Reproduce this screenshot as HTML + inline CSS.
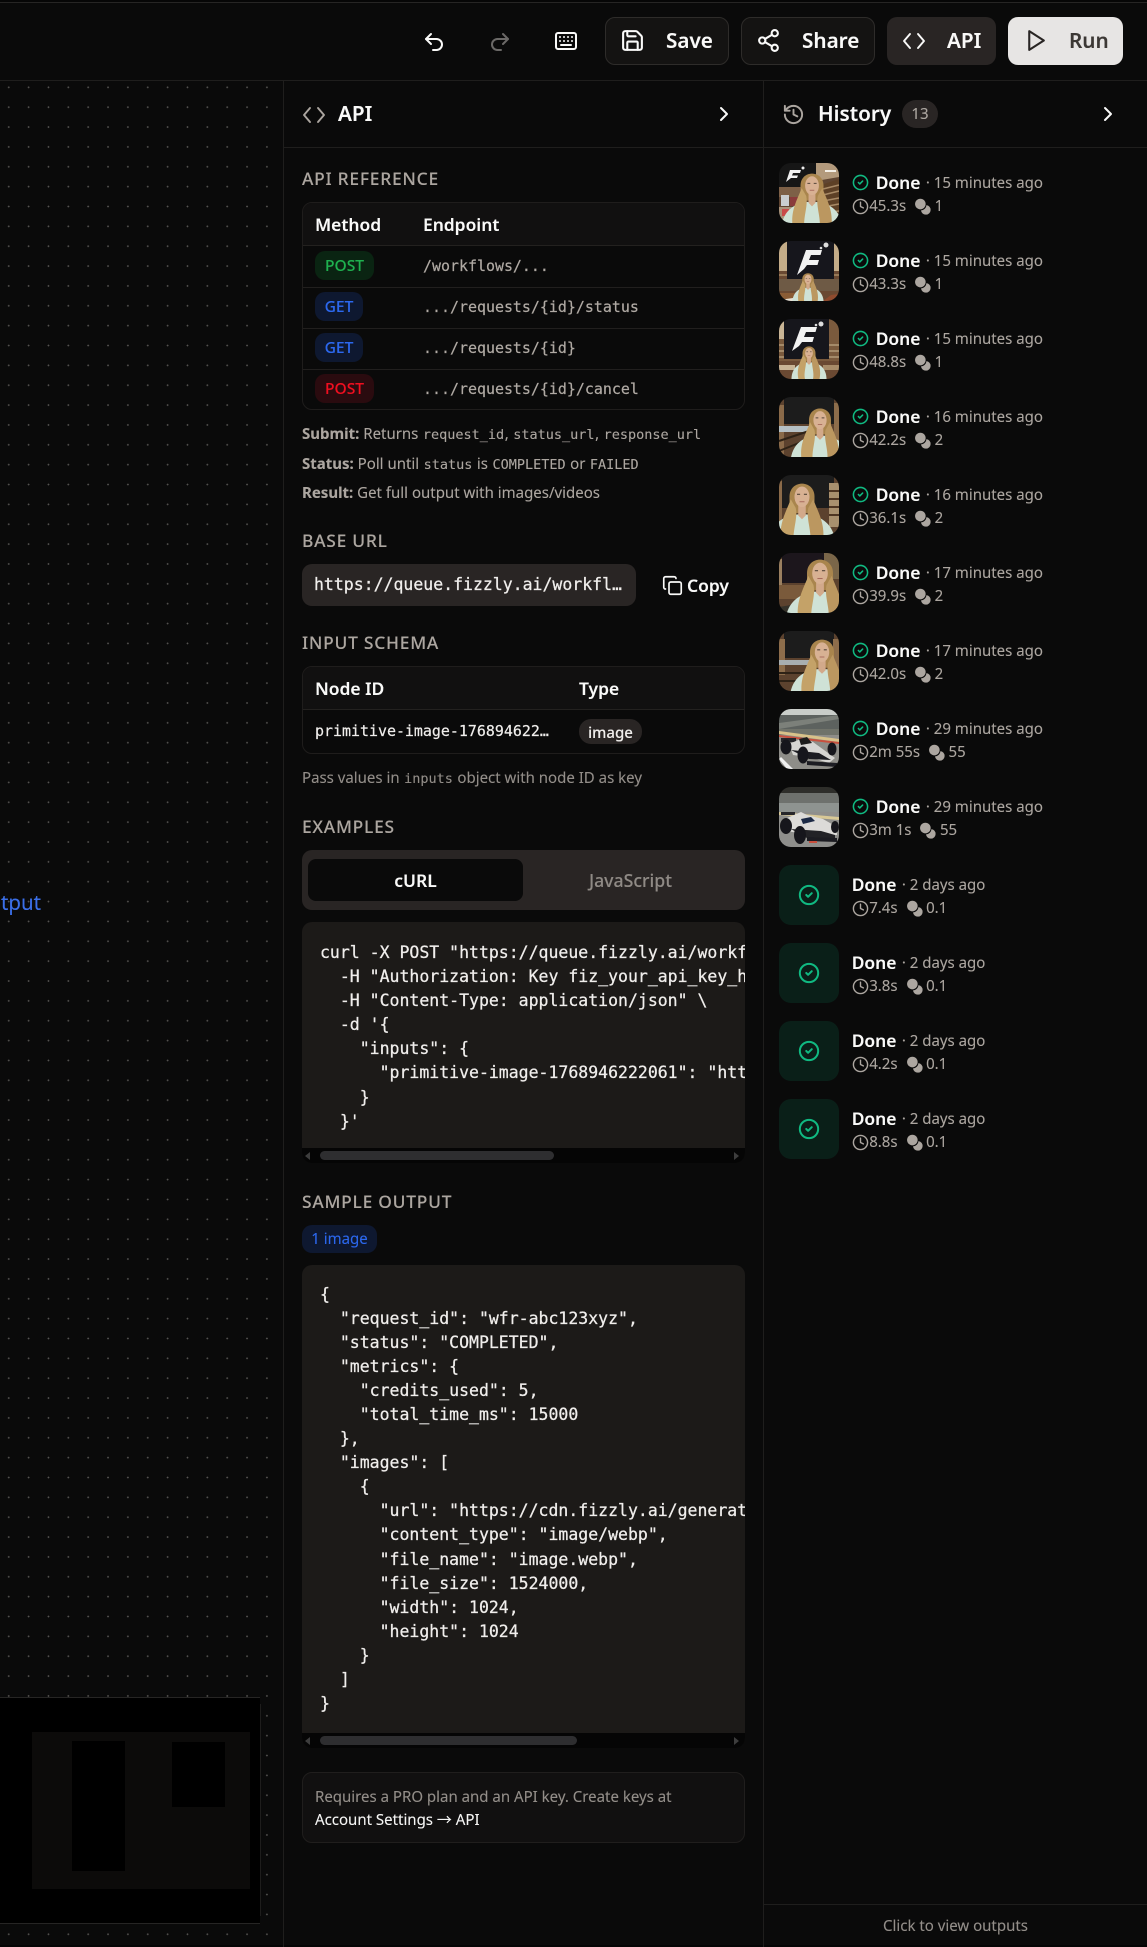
<!DOCTYPE html>
<html lang="en"><head><meta charset="utf-8"><title>Workflow API</title>
<style>
*{box-sizing:border-box}
html,body{margin:0;padding:0;background:#0a0a0a}
body{position:relative;width:1147px;height:1947px;overflow:hidden;font-family:"Noto Sans","Noto Sans CJK JP","Liberation Sans",sans-serif;color:#fafaf9;-webkit-text-stroke:.1px}
.a{position:absolute}
.t{position:absolute;white-space:pre;line-height:24px}
.m{font-family:"DejaVu Sans Mono","Liberation Mono",monospace}
.h{position:absolute;left:302px;font-size:17.4px;line-height:24px;letter-spacing:.75px;color:#aca6a0;font-weight:500;white-space:pre}
.btn{position:absolute;top:17px;height:48px;border-radius:10px}
.lbl{position:absolute;font-size:20.7px;font-weight:600;line-height:48px;top:0;white-space:pre}
svg.i{position:absolute;fill:none;stroke:currentColor;stroke-width:2;stroke-linecap:round;stroke-linejoin:round}
.tbl{position:absolute;left:302px;width:443px;border:1px solid #1f1d1c;border-radius:10px;overflow:hidden}
.tbl .hd{position:absolute;left:0;right:0;top:0;background:#111010;border-bottom:1px solid #23211f}
.rl{position:absolute;left:0;right:0;height:1px;background:#211f1e}
.b{position:absolute;border-radius:10px;font-size:15.6px;line-height:29px;height:29px;text-align:center;font-weight:500}
.th{position:absolute;font-size:17.4px;font-weight:600;line-height:24px;color:#fafaf9}
.ep{position:absolute;font-size:14.95px;line-height:24px;color:#b0aaa4;white-space:pre;font-family:"DejaVu Sans Mono","Liberation Mono",monospace;-webkit-text-stroke:.2px}
.p{position:absolute;left:302px;font-size:15px;line-height:24px;color:#aca6a0;white-space:pre}
.p b{font-weight:700}
.p code{font-family:"DejaVu Sans Mono","Liberation Mono",monospace;font-size:13.5px;padding:0 .6px}
.code{position:absolute;left:302px;width:443px;background:#1c1a18;border-radius:10px;overflow:hidden}
.code pre{position:absolute;left:18px;margin:0;font-family:"DejaVu Sans Mono","Liberation Mono",monospace;font-size:16.5px;line-height:24.1px;color:#f0eeec;-webkit-text-stroke:.25px}
.sb{position:absolute;left:0;right:0;bottom:0;height:15px;background:#050505}
.sb i{position:absolute;top:3px;left:18px;height:9px;border-radius:5px;background:#2e2e30}
.tl,.tr{position:absolute;top:3.5px;width:0;height:0;border-top:4px solid transparent;border-bottom:4px solid transparent}
.tl{left:3px;border-right:5px solid #3d3d3d}
.tr{right:6px;border-left:5px solid #3d3d3d}
.row{position:absolute;left:779px;width:340px;height:60px}
.th60{position:absolute;left:0;top:0;width:60px;height:60px;border-radius:12px;overflow:hidden;display:block}
.ok{background:#0a1f18}
.l1{position:absolute;left:72.7px;top:7px;height:24px;display:flex;align-items:center;white-space:pre;font-size:15px;color:#aca6a0}
.l1 span{position:relative;top:1px;margin-left:1.5px}
.l1 b{font-weight:600;font-size:17.4px;color:#fafaf9;position:relative;top:1px}
.l1 svg,.l2 svg{flex:none;width:17px;height:17px}
.l2{position:absolute;left:72.7px;top:31px;height:24px;display:flex;align-items:center;white-space:pre;font-size:15px;color:#aca6a0}
.l2 span{margin-left:.5px}
.l2 em{font-style:normal;margin-left:3.5px}
.l2 svg+span+svg{margin-left:8px}
</style></head><body>
<svg width="0" height="0" style="position:absolute"><defs>
<symbol id="chk" viewBox="0 0 24 24"><circle cx="12" cy="12" r="10" fill="none" stroke="#10b981" stroke-width="2.2"/><path d="m9 12 2 2 4-4" fill="none" stroke="#10b981" stroke-width="2.2" stroke-linecap="round" stroke-linejoin="round"/></symbol>
<symbol id="clk" viewBox="0 0 24 24"><circle cx="12" cy="12" r="10" fill="none" stroke="#aca6a0" stroke-width="2"/><path d="M12 6v6l4 2" fill="none" stroke="#aca6a0" stroke-width="2" stroke-linecap="round" stroke-linejoin="round"/></symbol>
<symbol id="coin" viewBox="0 0 24 24"><circle cx="9" cy="8.5" r="7.5" fill="#aca6a0"/><path d="M17.5 10a6.8 6.8 0 1 1-7.6 7.4c4.2-.3 7.4-3.3 7.6-7.4z" fill="#aca6a0"/></symbol>
<g id="person">
<path d="M-27 52C-27 32-14 25 0 25C14 25 27 32 27 52Z" fill="#cfe2d6"/>
<path d="M-10 11C-10-3 10-3 10 11C10 16 10 20 9 24L-9 24C-10 20-10 16-10 11Z" fill="#a9854e"/>
<path d="M-3 16h6v10l-3 3-3-3z" fill="#d2a98a"/>
<path d="M-9 13C-13 24-20 34-16 52L-6 52C-9 40-3 30-5 20Z" fill="#c4a268"/>
<path d="M9 13C13 24 20 34 16 52L6 52C9 40 3 30 5 20Z" fill="#bb9760"/>
<ellipse cx="0" cy="11" rx="6" ry="8.2" fill="#d8b193"/>
<path d="M-4 9h2.500M1.500 9H4" stroke="#55463a" stroke-width=".9"/>
<path d="M-2 15h4" stroke="#a86a5c" stroke-width=".8"/>
</g>
<filter id="sf" x="0" y="0" width="100%" height="100%"><feGaussianBlur stdDeviation=".35"/></filter>
</defs></svg>

<!-- top -->
<div class="a" style="left:0;top:0;width:1147px;height:2px;background:#060606"></div>
<div class="a" style="left:0;top:2px;width:1147px;height:1px;background:#262524"></div>
<div class="a" style="left:0;top:80px;width:1147px;height:1px;background:#1f1e1d"></div>

<svg class="i" style="left:422px;top:30px;color:#fafaf9" width="24" height="24" viewBox="0 0 24 24"><path d="M9 14 4 9l5-5"/><path d="M4 9h10.500a5.500 5.500 0 0 1 5.500 5.500a5.500 5.500 0 0 1-5.500 5.500H11"/></svg>
<svg class="i" style="left:488px;top:30px;color:#6b6967" width="24" height="24" viewBox="0 0 24 24"><path d="m15 14 5-5-5-5"/><path d="M20 9H9.500A5.500 5.500 0 0 0 4 14.500A5.500 5.500 0 0 0 9.500 20H13"/></svg>
<svg class="i" style="left:554px;top:29px;color:#fafaf9" width="24" height="24" viewBox="0 0 24 24"><rect x="2" y="4" width="20" height="16" rx="2"/><path d="M6 8h.01M10 8h.01M14 8h.01M18 8h.01M6 12h.01M10 12h.01M14 12h.01M18 12h.01M7 16h10"/></svg>

<div class="btn" style="left:605px;width:124px;background:#141312;border:1px solid #2e2c2a"></div>
<svg class="i" style="left:620px;top:28px;color:#fafaf9" width="25" height="25" viewBox="0 0 24 24"><path d="M15.200 3a2 2 0 0 1 1.400.6l3.800 3.800a2 2 0 0 1 .6 1.400V19a2 2 0 0 1-2 2H5a2 2 0 0 1-2-2V5a2 2 0 0 1 2-2z"/><path d="M17 21v-7a1 1 0 0 0-1-1H8a1 1 0 0 0-1 1v7"/><path d="M7 3v4a1 1 0 0 0 1 1h7"/></svg>
<div class="lbl" style="left:666px;top:17px">Save</div>

<div class="btn" style="left:741px;width:134px;background:#141312;border:1px solid #2e2c2a"></div>
<svg class="i" style="left:756px;top:28px;color:#fafaf9" width="25" height="25" viewBox="0 0 24 24"><circle cx="18" cy="5" r="3"/><circle cx="6" cy="12" r="3"/><circle cx="18" cy="19" r="3"/><path d="m8.590 13.510 6.830 3.980"/><path d="m15.410 6.510-6.820 3.980"/></svg>
<div class="lbl" style="left:802px;top:17px">Share</div>

<div class="btn" style="left:887px;width:109px;background:#292524"></div>
<svg class="i" style="left:902px;top:29px;color:#fafaf9;stroke-width:1.9" width="24" height="24" viewBox="0 0 24 24"><path d="m8 5-6 7 6 7"/><path d="m16 5 6 7-6 7"/></svg>
<div class="lbl" style="left:947px;top:17px">API</div>

<div class="btn" style="left:1008px;width:115px;background:#e7e5e4"></div>
<svg class="i" style="left:1023px;top:28px;color:#292524" width="25" height="25" viewBox="0 0 24 24"><path d="M6 3l14 9-14 9z"/></svg>
<div class="lbl" style="left:1069px;top:17px;color:#3c3835">Run</div>

<!-- canvas -->
<div class="a" style="left:0;top:81px;width:283px;height:1866px;background-color:#0a0a0a;background-image:radial-gradient(circle,#565452 0.7px,transparent 1.05px);background-size:19.87px 19.87px;background-position:-1.2px -3.6px"></div>
<div class="t" style="left:1px;top:891px;font-size:20.5px;color:#3b6fe8">tput</div>
<div class="a" style="left:0;top:1697px;width:260px;height:227px;background:#000;border-top:1px solid #262524;border-bottom:1px solid #262524"></div>
<div class="a" style="left:260px;top:1704px;width:1px;height:212px;background:#1e1d1c"></div>
<div class="a" style="left:32px;top:1732px;width:218px;height:157px;background:#0c0b0a"></div>
<div class="a" style="left:72px;top:1741px;width:53px;height:130px;background:#000"></div>
<div class="a" style="left:172px;top:1742px;width:53px;height:65px;background:#000"></div>
<div class="a" style="left:0;top:1945px;width:1147px;height:2px;background:#050505"></div>

<!-- panel borders -->
<div class="a" style="left:283px;top:81px;width:1px;height:1866px;background:#1f1e1d"></div>
<div class="a" style="left:763px;top:81px;width:1px;height:1866px;background:#1f1e1d"></div>
<div class="a" style="left:284px;top:147px;width:863px;height:1px;background:#1f1e1d"></div>

<!-- API head -->
<svg class="i" style="left:302px;top:103px;color:#aca6a0;stroke-width:1.9" width="24" height="24" viewBox="0 0 24 24"><path d="m8 5-6 7 6 7"/><path d="m16 5 6 7-6 7"/></svg>
<div class="t" style="left:338px;top:102px;font-size:20.700px;font-weight:600">API</div>
<svg class="i" style="left:712px;top:102px;color:#fafaf9" width="24" height="24" viewBox="0 0 24 24"><path d="m9 18 6-6-6-6"/></svg>

<div class="h" style="top:166.500px">API REFERENCE</div>
<div class="tbl" style="top:202px;height:208px">
 <div class="hd" style="height:43px"></div>
 <div class="rl" style="top:84px"></div><div class="rl" style="top:125px"></div><div class="rl" style="top:166px"></div>
 <div class="th" style="left:12px;top:10px">Method</div><div class="th" style="left:120px;top:10px">Endpoint</div>
 <div class="b" style="left:12px;top:48px;width:59px;background:#0a2412;color:#1fb04f">POST</div>
 <div class="b" style="left:12px;top:89px;width:48px;background:#0e1830;color:#2c68ee">GET</div>
 <div class="b" style="left:12px;top:130px;width:48px;background:#0e1830;color:#2c68ee">GET</div>
 <div class="b" style="left:12px;top:171px;width:59px;background:#2a0b0f;color:#ee0f20">POST</div>
 <div class="ep" style="left:120px;top:51px">/workflows/...</div>
 <div class="ep" style="left:120px;top:92px">.../requests/{id}/status</div>
 <div class="ep" style="left:120px;top:133px">.../requests/{id}</div>
 <div class="ep" style="left:120px;top:174px">.../requests/{id}/cancel</div>
</div>
<div class="p" style="top:422px"><b>Submit:</b> Returns <code>request_id</code>, <code>status_url</code>, <code>response_url</code></div>
<div class="p" style="top:452px"><b>Status:</b> Poll until <code>status</code> is <code>COMPLETED</code> or <code>FAILED</code></div>
<div class="p" style="top:480.500px"><b>Result:</b> Get full output with images/videos</div>

<div class="h" style="top:529px">BASE URL</div>
<div class="a" style="left:302px;top:564px;width:334px;height:42px;background:#292524;border-radius:10px"></div>
<div class="t m" style="left:314px;top:573px;font-size:16.500px;color:#f0eeec;-webkit-text-stroke:.25px">https://queue.fizzly.ai/workfl…</div>
<svg class="i" style="left:662px;top:575px;color:#fafaf9;stroke-width:1.900" width="21" height="21" viewBox="0 0 24 24"><rect x="8" y="8" width="14" height="14" rx="2"/><path d="M4 16c-1.100 0-2-.9-2-2V4c0-1.100.9-2 2-2h10c1.100 0 2 .9 2 2"/></svg>
<div class="t" style="left:687px;top:574px;font-size:17.400px;font-weight:600">Copy</div>

<div class="h" style="top:631px">INPUT SCHEMA</div>
<div class="tbl" style="top:666px;height:88px">
 <div class="hd" style="height:43px"></div>
 <div class="th" style="left:12px;top:10px">Node ID</div><div class="th" style="left:276px;top:10px">Type</div>
 <div class="ep" style="left:12px;top:52px;color:#f0eeec">primitive-image-176894622…</div>
 <div class="b" style="left:276px;top:52px;width:63px;height:25px;line-height:29px;font-size:15px;border-radius:12px;background:#292524;color:#f0eeec;font-weight:500">image</div>
</div>
<div class="p" style="top:766px;color:#938e89">Pass values in <code>inputs</code> object with node ID as key</div>

<div class="h" style="top:815px">EXAMPLES</div>
<div class="a" style="left:302px;top:850px;width:443px;height:60px;background:#292524;border-radius:10px"></div>
<div class="a" style="left:308px;top:859px;width:215px;height:42px;background:#0a0a0a;border-radius:8px;text-align:center;font-size:17.400px;font-weight:600;line-height:45px">cURL</div>
<div class="a" style="left:523px;top:859px;width:215px;height:42px;text-align:center;font-size:17.700px;font-weight:500;line-height:45px;color:#8f8a85">JavaScript</div>

<div class="code" style="top:922px;height:241px">
<pre style="top:19px">curl -X POST "https://queue.fizzly.ai/workflows/
  -H "Authorization: Key fiz_your_api_key_here" \
  -H "Content-Type: application/json" \
  -d '{
    "inputs": {
      "primitive-image-1768946222061": "https://
    }
  }'</pre>
<div class="sb"><div class="tl"></div><div class="tr"></div><i style="width:234px"></i></div>
</div>

<div class="h" style="top:1190px">SAMPLE OUTPUT</div>
<div class="a" style="left:302px;top:1225px;width:75px;height:28px;background:#0e1830;border-radius:10px;text-align:center;font-size:15px;line-height:28px;color:#2c68ee">1 image</div>

<div class="code" style="top:1265px;height:483px">
<pre style="top:17.500px">{
  "request_id": "wfr-abc123xyz",
  "status": "COMPLETED",
  "metrics": {
    "credits_used": 5,
    "total_time_ms": 15000
  },
  "images": [
    {
      "url": "https://cdn.fizzly.ai/generated/
      "content_type": "image/webp",
      "file_name": "image.webp",
      "file_size": 1524000,
      "width": 1024,
      "height": 1024
    }
  ]
}</pre>
<div class="sb"><div class="tl"></div><div class="tr"></div><i style="width:257px"></i></div>
</div>

<div class="a" style="left:302px;top:1772px;width:443px;height:71px;background:#111010;border:1px solid #201e1d;border-radius:10px"></div>
<div class="t" style="left:315px;top:1785px;font-size:15px;color:#938e89">Requires a PRO plan and an API key. Create keys at</div>
<div class="t" style="left:315px;top:1808px;font-size:15px;color:#f5f5f4">Account Settings → API</div>

<!-- History head -->
<svg class="i" style="left:782px;top:103px;color:#aca6a0" width="23" height="23" viewBox="0 0 24 24"><path d="M3 12a9 9 0 1 0 9-9 9.750 9.750 0 0 0-6.740 2.740L3 8"/><path d="M3 3v5h5"/><path d="M12 7v5l4 2"/></svg>
<div class="t" style="left:818px;top:102px;font-size:20.700px;font-weight:600">History</div>
<div class="a" style="left:902px;top:100px;width:36px;height:28px;border-radius:14px;background:#292524;text-align:center;font-size:15px;line-height:28px;color:#aca6a0">13</div>
<svg class="i" style="left:1096px;top:102px;color:#fafaf9" width="24" height="24" viewBox="0 0 24 24"><path d="m9 18 6-6-6-6"/></svg>

<!-- Row 0 -->
<div class="row" style="top:163px">
<svg class="th60" viewBox="0 0 60 60"><g filter="url(#sf)"><rect width="60" height="60" fill="#5f4530"/><path d="M37 0h23v14l-23 4z" fill="#b39a7c"/><rect x="46" y="7" width="11" height="2" fill="#f4efe6"/><path d="M42 22l18-6v44H42z" fill="#5d4028"/><path d="M44 26l16-4M44 32l16-4M44 38l16-3M44 44l16-3M44 50l16-2" stroke="#a88a66" stroke-width="1.500"/><rect width="37" height="24" fill="#141214"/><rect y="24" width="26" height="10" fill="#7d6046"/><rect x="2" y="32" width="8" height="11" fill="#c9cdd0"/><rect x="11" y="34" width="9" height="9" fill="#8a3a3a"/><rect y="44" width="26" height="16" fill="#a8927a"/><rect x="3" y="46" width="7" height="7" fill="#c94a4a"/><rect x="12" y="47" width="7" height="7" fill="#e4e0d4"/><path d="M7 19 11 7h11l-1 3h-7l-1 2.500h6l-1 2.500h-6z" fill="#f0f0f0"/><circle cx="24" cy="5" r="1.500" fill="#eee"/><use href="#person" transform="translate(33 10) scale(1.150)"/></g></svg>
<div class="l1"><svg><use href="#chk"/></svg><b style="margin-left:7px">Done</b><span> · 15 minutes ago</span></div>
<div class="l2"><svg><use href="#clk"/></svg><span>45.3s</span><svg><use href="#coin"/></svg><em>1</em></div>
</div>

<!-- Row 1 -->
<div class="row" style="top:241px">
<svg class="th60" viewBox="0 0 60 60"><g filter="url(#sf)"><rect width="60" height="60" fill="#c4ac88"/><rect y="30" width="60" height="30" fill="#6b4a30"/><path d="M0 34h9M0 40h9M0 46h9M52 34h8M52 40h8M52 46h8" stroke="#a88a66" stroke-width="1.500"/><rect x="8" y="0" width="47" height="38" fill="#15141a"/><path d="M18 34 27 9h16l-1.500 5H32l-2 5h10l-1.500 5H28l-3 4z" fill="#f2f2f2"/><circle cx="47" cy="4" r="2.500" fill="#ddd"/><circle cx="42" cy="7" r="1.300" fill="#ddd"/><rect y="38" width="60" height="12" fill="#6e5a44"/><path d="M0 60V52h16l4 8z" fill="#8a5b36"/><path d="M0 59l14-2 2 3H0z" fill="#e8e2d6"/><path d="M44 60l8-6 8-1v7z" fill="#8f4b2f"/><use href="#person" transform="translate(29 32) scale(.580)"/></g></svg>
<div class="l1"><svg><use href="#chk"/></svg><b style="margin-left:7px">Done</b><span> · 15 minutes ago</span></div>
<div class="l2"><svg><use href="#clk"/></svg><span>43.3s</span><svg><use href="#coin"/></svg><em>1</em></div>
</div>

<!-- Row 2 -->
<div class="row" style="top:319px">
<svg class="th60" viewBox="0 0 60 60"><g filter="url(#sf)"><rect width="60" height="60" fill="#7a5a3c"/><rect width="6" height="20" fill="#c9b596"/><path d="M0 26h6M0 32h6M0 38h6M50 26h10M50 32h10M50 38h10" stroke="#b29a78" stroke-width="1.500"/><rect x="5" y="0" width="45" height="40" fill="#16151a"/><path d="M13 32 22 8h16l-1.500 5H27l-2 5h10l-1.500 5H23l-3 4z" fill="#f2f2f2"/><circle cx="42" cy="5" r="2.500" fill="#ddd"/><circle cx="37" cy="6" r="1.300" fill="#ddd"/><rect y="42" width="60" height="18" fill="#6a4a32"/><rect y="46" width="16" height="5" fill="#c9b596"/><rect x="44" y="46" width="16" height="5" fill="#a78b68"/><use href="#person" transform="translate(30 27) scale(.650)"/></g></svg>
<div class="l1"><svg><use href="#chk"/></svg><b style="margin-left:7px">Done</b><span> · 15 minutes ago</span></div>
<div class="l2"><svg><use href="#clk"/></svg><span>48.8s</span><svg><use href="#coin"/></svg><em>1</em></div>
</div>

<!-- Row 3 -->
<div class="row" style="top:397px">
<svg class="th60" viewBox="0 0 60 60"><g filter="url(#sf)"><rect width="60" height="60" fill="#5c432e"/><rect x="5" width="50" height="27" fill="#1c1a1c"/><rect y="8" width="5" height="52" fill="#8a6a4a"/><rect x="55" y="6" width="5" height="50" fill="#8d6d4c"/><rect y="29" width="32" height="6" fill="#b6c0c4"/><path d="M0 44 30 34M0 54 30 42" stroke="#2f2216" stroke-width="2"/><use href="#person" transform="translate(41 11) scale(1.100)"/></g></svg>
<div class="l1"><svg><use href="#chk"/></svg><b style="margin-left:7px">Done</b><span> · 16 minutes ago</span></div>
<div class="l2"><svg><use href="#clk"/></svg><span>42.2s</span><svg><use href="#coin"/></svg><em>2</em></div>
</div>

<!-- Row 4 -->
<div class="row" style="top:475px">
<svg class="th60" viewBox="0 0 60 60"><g filter="url(#sf)"><rect width="60" height="60" fill="#5c432e"/><rect x="3" width="52" height="33" fill="#1c1a1c"/><rect y="6" width="3" height="44" fill="#8a6a4a"/><rect x="50" y="8" width="10" height="44" fill="#a8906e"/><path d="M50 16h10M50 24h10M50 32h10M50 40h10" stroke="#4d3524" stroke-width="2"/><use href="#person" transform="translate(23 8) scale(1.250)"/></g></svg>
<div class="l1"><svg><use href="#chk"/></svg><b style="margin-left:7px">Done</b><span> · 16 minutes ago</span></div>
<div class="l2"><svg><use href="#clk"/></svg><span>36.1s</span><svg><use href="#coin"/></svg><em>2</em></div>
</div>

<!-- Row 5 -->
<div class="row" style="top:553px">
<svg class="th60" viewBox="0 0 60 60"><g filter="url(#sf)"><rect width="60" height="60" fill="#5c432e"/><rect x="3" width="42" height="30" fill="#1a181a"/><rect x="45" width="15" height="26" fill="#7a664a"/><rect y="6" width="3" height="30" fill="#9b8060"/><rect y="32" width="36" height="14" fill="#7a5a3a"/><path d="M0 60V54l24-4-8 10z" fill="#35302a"/><use href="#person" transform="translate(41 6) scale(1.300)"/></g></svg>
<div class="l1"><svg><use href="#chk"/></svg><b style="margin-left:7px">Done</b><span> · 17 minutes ago</span></div>
<div class="l2"><svg><use href="#clk"/></svg><span>39.9s</span><svg><use href="#coin"/></svg><em>2</em></div>
</div>

<!-- Row 6 -->
<div class="row" style="top:631px">
<svg class="th60" viewBox="0 0 60 60"><g filter="url(#sf)"><rect width="60" height="60" fill="#5c432e"/><rect x="5" width="50" height="27" fill="#1c1a1c"/><rect y="8" width="6" height="36" fill="#8d6d4c"/><rect x="54" y="8" width="6" height="36" fill="#8d6d4c"/><rect y="29" width="32" height="5" fill="#a8aeb0"/><path d="M0 42h30M0 50h24" stroke="#2f2216" stroke-width="2"/><use href="#person" transform="translate(43 8) scale(1.200)"/></g></svg>
<div class="l1"><svg><use href="#chk"/></svg><b style="margin-left:7px">Done</b><span> · 17 minutes ago</span></div>
<div class="l2"><svg><use href="#clk"/></svg><span>42.0s</span><svg><use href="#coin"/></svg><em>2</em></div>
</div>

<!-- Row 7 -->
<div class="row" style="top:709px">
<svg class="th60" viewBox="0 0 60 60"><g filter="url(#sf)"><rect width="60" height="60" fill="#8e8d88"/><rect width="60" height="6" fill="#c9cdc9"/><rect y="6" width="60" height="14" fill="#5d625e"/><path d="M0 14 60 6v4L0 20z" fill="#7b807a"/><rect y="20" width="60" height="6" fill="#6f736b"/><path d="M0 22l60 8v3L0 25z" fill="#d8c28a"/><path d="M0 26l60 7v2L0 28z" fill="#c9503c"/><path d="M0 50l8 10h6L2 48z" fill="#f0f0f0"/><path d="M2 29h15v4H2z" fill="#26262a"/><path d="M10 35l14-6 10 4 22 16-6 5-20-6-16-2z" fill="#d6d5d2"/><path d="M12 41l28 3 12 7-22-1z" fill="#1f1f21"/><path d="M20 30l8-2 5 6-11 2z" fill="#1c1c1e"/><ellipse cx="7" cy="38" rx="5.500" ry="7.500" fill="#19191b"/><ellipse cx="24" cy="46" rx="5.500" ry="8.500" fill="#19191b"/><ellipse cx="53" cy="40" rx="4.500" ry="6.500" fill="#19191b"/><path d="M28 52l30 2v4l-30-2z" fill="#1f1f21"/></g></svg>
<div class="l1"><svg><use href="#chk"/></svg><b style="margin-left:7px">Done</b><span> · 29 minutes ago</span></div>
<div class="l2"><svg><use href="#clk"/></svg><span>2m 55s</span><svg><use href="#coin"/></svg><em>55</em></div>
</div>

<!-- Row 8 -->
<div class="row" style="top:787px">
<svg class="th60" viewBox="0 0 60 60"><g filter="url(#sf)"><rect width="60" height="60" fill="#8f8f8c"/><rect width="60" height="6" fill="#2d2e2c"/><rect y="6" width="60" height="10" fill="#6e716d"/><rect y="16" width="60" height="9" fill="#8e9390"/><path d="M0 25l60 5v3L0 28z" fill="#d8c896"/><path d="M2 25h14v3H2z" fill="#26262a"/><path d="M8 31l14-6 6 3 16 4 14 8v8H30L8 44z" fill="#dcdbd8"/><path d="M22 32l10-2 4 4-12 3z" fill="#1d2a44"/><path d="M12 42l30 2 14 4v3H28z" fill="#232325"/><ellipse cx="7" cy="39" rx="6" ry="8" fill="#19191b"/><ellipse cx="21" cy="48" rx="6" ry="9" fill="#19191b"/><ellipse cx="56" cy="40" rx="4" ry="6" fill="#19191b"/><path d="M28 50l30 1v4l-30-1z" fill="#1e1e20"/><rect x="30" y="54" width="8" height="2" fill="#c9503c"/></g></svg>
<div class="l1"><svg><use href="#chk"/></svg><b style="margin-left:7px">Done</b><span> · 29 minutes ago</span></div>
<div class="l2"><svg><use href="#clk"/></svg><span>3m 1s</span><svg><use href="#coin"/></svg><em>55</em></div>
</div>

<!-- Rows 9-12 -->
<div class="row" style="top:865px">
<div class="th60 ok"><svg style="position:absolute;left:19px;top:19px" width="22" height="22"><use href="#chk"/></svg></div>
<div class="l1"><b>Done</b><span> · 2 days ago</span></div>
<div class="l2"><svg><use href="#clk"/></svg><span>7.4s</span><svg><use href="#coin"/></svg><em>0.1</em></div>
</div>
<div class="row" style="top:943px">
<div class="th60 ok"><svg style="position:absolute;left:19px;top:19px" width="22" height="22"><use href="#chk"/></svg></div>
<div class="l1"><b>Done</b><span> · 2 days ago</span></div>
<div class="l2"><svg><use href="#clk"/></svg><span>3.8s</span><svg><use href="#coin"/></svg><em>0.1</em></div>
</div>
<div class="row" style="top:1021px">
<div class="th60 ok"><svg style="position:absolute;left:19px;top:19px" width="22" height="22"><use href="#chk"/></svg></div>
<div class="l1"><b>Done</b><span> · 2 days ago</span></div>
<div class="l2"><svg><use href="#clk"/></svg><span>4.2s</span><svg><use href="#coin"/></svg><em>0.1</em></div>
</div>
<div class="row" style="top:1099px">
<div class="th60 ok"><svg style="position:absolute;left:19px;top:19px" width="22" height="22"><use href="#chk"/></svg></div>
<div class="l1"><b>Done</b><span> · 2 days ago</span></div>
<div class="l2"><svg><use href="#clk"/></svg><span>8.8s</span><svg><use href="#coin"/></svg><em>0.1</em></div>
</div>

<div class="a" style="left:764px;top:1904px;width:383px;height:1px;background:#1f1e1d"></div>
<div class="a" style="left:764px;top:1914px;width:383px;text-align:center;font-size:15px;line-height:24px;color:#938e89">Click to view outputs</div>
</body></html>
